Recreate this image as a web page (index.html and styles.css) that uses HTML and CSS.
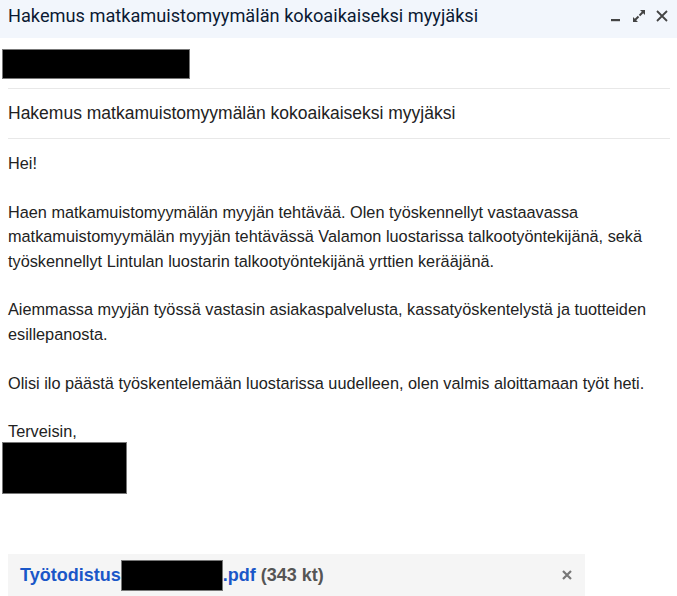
FILE: index.html
```html
<!DOCTYPE html>
<html lang="fi">
<head>
<meta charset="utf-8">
<title>Hakemus</title>
<link rel="stylesheet" href="styles.css">
</head>
<body>
<div class="window">
  <header class="titlebar">
    <span class="title">Hakemus matkamuistomyymälän kokoaikaiseksi myyjäksi</span>
    <div class="controls">
      <svg class="ic" width="14" height="14" viewBox="0 0 14 14"><rect x="2" y="10" width="9" height="2.2" fill="#444"/></svg>
      <svg class="ic" width="16" height="16" viewBox="0 0 16 16"><path d="M9 2h5v5l-1.8-1.8-3 3-1.4-1.4 3-3zM7 14H2V9l1.8 1.8 3-3 1.4 1.4-3 3z" fill="#444"/></svg>
      <svg class="ic" width="14" height="14" viewBox="0 0 14 14"><path d="M2 2l10 10M12 2L2 12" stroke="#444" stroke-width="1.8"/></svg>
    </div>
  </header>
  <div class="redact r1"></div>
  <div class="subject">Hakemus matkamuistomyymälän kokoaikaiseksi myyjäksi</div>
  <div class="body">
    <p>Hei!</p>
    <p>Haen matkamuistomyymälän myyjän tehtävää. Olen työskennellyt vastaavassa matkamuistomyymälän myyjän tehtävässä Valamon luostarissa talkootyöntekijänä, sekä työskennellyt Lintulan luostarin talkootyöntekijänä yrttien kerääjänä.</p>
    <p>Aiemmassa myyjän työssä vastasin asiakaspalvelusta, kassatyöskentelystä ja tuotteiden esillepanosta.</p>
    <p>Olisi ilo päästä työskentelemään luostarissa uudelleen, olen valmis aloittamaan työt heti.</p>
    <p class="sign">Terveisin,</p>
  </div>
  <div class="redact r2"></div>
  <div class="attachment">
    <span class="att-name">Työtodistus<span class="redact r3"></span>.pdf</span>
    <span class="att-size">(343 kt)</span>
    <svg class="att-x" width="12" height="12" viewBox="0 0 12 12"><path d="M2 2l8 8M10 2L2 10" stroke="#777" stroke-width="2.2"/></svg>
  </div>
</div>
</body>
</html>
```
FILE: styles.css
```css
html, body {
  margin: 0;
  padding: 0;
  background: #ffffff;
}
.window {
  width: 677px;
  height: 596px;
  overflow: hidden;
  font-family: "Liberation Sans", Arial, sans-serif;
}
.titlebar {
  height: 38px;
  background: #f2f6fc;
  display: flex;
  align-items: center;
  justify-content: space-between;
  padding: 0 8px 0 8px;
  box-sizing: border-box;
}
.title {
  font-family: Roboto, "Noto Sans", sans-serif;
  font-size: 18.2px;
  color: #0b1a33;
  padding-bottom: 8px;
}
.controls {
  display: flex;
  align-items: center;
  gap: 8px;
  padding-bottom: 6px;
}
.ic {
  display: block;
}
.redact {
  background: #000;
  border: 1px solid #777;
  box-sizing: border-box;
}
.r1 {
  width: 188px;
  height: 30px;
  margin: 11px 0 0 2px;
}
.subject {
  margin: 9px 7px 0 8px;
  border-top: 1px solid #e8e8e8;
  border-bottom: 1px solid #e8e8e8;
  height: 49px;
  line-height: 49px;
  font-size: 17.5px;
  color: #222;
}
.body {
  padding: 0 7px 0 8px;
  font-size: 16.3px;
  line-height: 24.4px;
  color: #222;
}
.body p {
  margin: 12px 0 24.4px 0;
}
.body p ~ p {
  margin-top: 0;
}
.body p.sign {
  margin-bottom: 0;
}
.r2 {
  width: 125px;
  height: 52px;
  margin: -2px 0 0 2px;
}
.attachment {
  margin: 60px 0 0 8px;
  width: 577px;
  height: 43px;
  background: #f5f5f5;
  display: flex;
  align-items: center;
  padding: 0 12px;
  box-sizing: border-box;
  font-family: "Liberation Sans", Arial, sans-serif;
  font-weight: 700;
  font-size: 18px;
}
.att-name {
  color: #1a57c8;
  display: flex;
  align-items: center;
}
.r3 {
  display: inline-block;
  width: 102px;
  height: 31px;
}
.att-size {
  color: #555;
  margin-left: 5px;
}
.att-x {
  margin-left: auto;
  display: block;
}
```
